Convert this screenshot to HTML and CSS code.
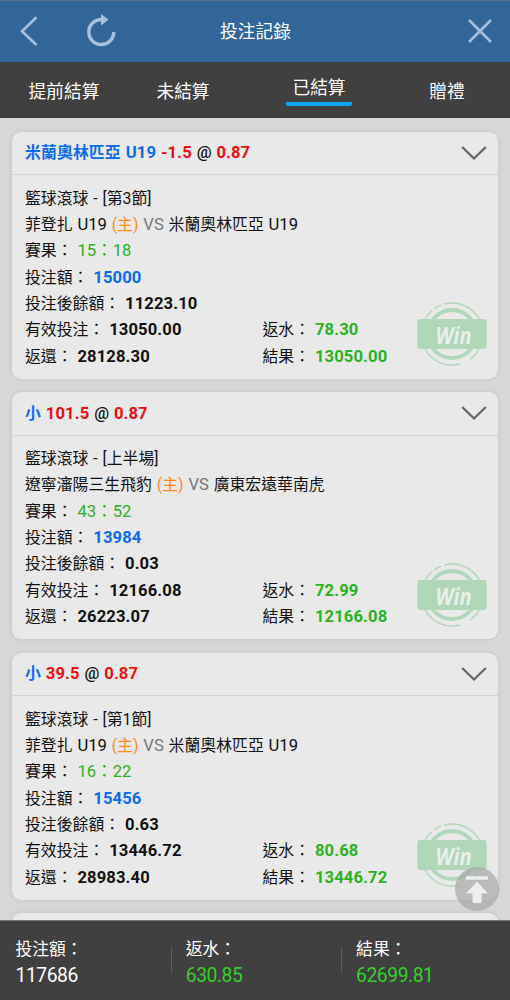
FILE: index.html
```html
<!DOCTYPE html>
<html lang="zh-Hant">

<head>
    <meta charset="UTF-8">
    <meta name="viewport" content="width=device-width, initial-scale=1.0">
    <title>投注記錄</title>
    <link rel="stylesheet" href="styles.css">
</head>

<body>
    <div class="app">
        <header class="header">
            <svg class="back" width="20" height="32" viewBox="0 0 20 32">
                <path d="M17.5 2.3 L3 16.2 L17.5 30" fill="none" stroke="#a6c1de" stroke-width="2.6" />
            </svg>
            <svg class="refresh" width="32" height="34" viewBox="0 0 32 34">
                <path d="M16 6.5 A12.5 12.5 0 1 0 27.8 19" fill="none" stroke="#a6c1de" stroke-width="3.4" />
                <path d="M15 1 L22.5 6.8 L15 12.5 Z" fill="#a6c1de" />
            </svg>
            <h1 class="title">投注記錄</h1>
            <svg class="close" width="26" height="26" viewBox="0 0 26 26">
                <path d="M2 2 L24 24 M24 2 L2 24" fill="none" stroke="#a6c1de" stroke-width="2.6" />
            </svg>
        </header>

        <nav class="tabs">
            <a class="tab">提前結算</a>
            <a class="tab">未結算</a>
            <a class="tab active"><span>已結算</span></a>
            <a class="tab">贈禮</a>
        </nav>

        <main class="list">
            <section class="card">
                <div class="card-head">
                    <p><b class="blue team">米蘭奧林匹亞 <span class="en">U19</span></b> <b class="red">-1.5</b> <span class="at">@</span> <b class="red">0.87</b></p>
                    <svg width="26" height="16"><use href="#arrow" /></svg>
                </div>
                <div class="card-body">
                    <p>籃球滾球 - [第3節]</p>
                    <p>菲登扎 <span class="en">U19</span> <span class="orange">(主)</span> <span class="gray en">VS</span> 米蘭奧林匹亞 <span class="en">U19</span></p>
                    <p>賽果： <span class="green en">15：18</span></p>
                    <p>投注額： <b class="blue">15000</b></p>
                    <p>投注後餘額： <b>11223.10</b></p>
                    <div class="row">
                        <p>有效投注： <b>13050.00</b></p>
                        <p>返水： <b class="green">78.30</b></p>
                    </div>
                    <div class="row">
                        <p>返還： <b>28128.30</b></p>
                        <p>結果： <b class="green">13050.00</b></p>
                    </div>
                </div>
                <svg class="stamp" width="70" height="64"><use href="#stamp" /></svg>
            </section>

            <section class="card">
                <div class="card-head">
                    <p><b class="blue team">小</b> <b class="red">101.5</b> <span class="at">@</span> <b class="red">0.87</b></p>
                    <svg width="26" height="16"><use href="#arrow" /></svg>
                </div>
                <div class="card-body">
                    <p>籃球滾球 - [上半場]</p>
                    <p>遼寧瀋陽三生飛豹 <span class="orange">(主)</span> <span class="gray en">VS</span> 廣東宏遠華南虎</p>
                    <p>賽果： <span class="green en">43：52</span></p>
                    <p>投注額： <b class="blue">13984</b></p>
                    <p>投注後餘額： <b>0.03</b></p>
                    <div class="row">
                        <p>有效投注： <b>12166.08</b></p>
                        <p>返水： <b class="green">72.99</b></p>
                    </div>
                    <div class="row">
                        <p>返還： <b>26223.07</b></p>
                        <p>結果： <b class="green">12166.08</b></p>
                    </div>
                </div>
                <svg class="stamp" width="70" height="64"><use href="#stamp" /></svg>
            </section>

            <section class="card">
                <div class="card-head">
                    <p><b class="blue team">小</b> <b class="red">39.5</b> <span class="at">@</span> <b class="red">0.87</b></p>
                    <svg width="26" height="16"><use href="#arrow" /></svg>
                </div>
                <div class="card-body">
                    <p>籃球滾球 - [第1節]</p>
                    <p>菲登扎 <span class="en">U19</span> <span class="orange">(主)</span> <span class="gray en">VS</span> 米蘭奧林匹亞 <span class="en">U19</span></p>
                    <p>賽果： <span class="green en">16：22</span></p>
                    <p>投注額： <b class="blue">15456</b></p>
                    <p>投注後餘額： <b>0.63</b></p>
                    <div class="row">
                        <p>有效投注： <b>13446.72</b></p>
                        <p>返水： <b class="green">80.68</b></p>
                    </div>
                    <div class="row">
                        <p>返還： <b>28983.40</b></p>
                        <p>結果： <b class="green">13446.72</b></p>
                    </div>
                </div>
                <svg class="stamp" width="70" height="64"><use href="#stamp" /></svg>
            </section>

            <section class="card"></section>
        </main>

        <svg class="to-top" width="44" height="44" viewBox="0 0 44 44">
            <circle cx="22" cy="22" r="22" fill="#a3a3a3" fill-opacity="0.65" />
            <rect x="11" y="9.3" width="22" height="3.4" rx="1" fill="#eee" />
            <path d="M22 14.5 L33 26.5 H26.5 V35 Q26.5 36 25.5 36 H18.5 Q17.5 36 17.5 35 V26.5 H11 Z" fill="#eee" />
        </svg>

        <footer class="total">
            <div class="total-item">
                <p>投注額：</p>
                <strong>117686</strong>
            </div>
            <div class="total-item">
                <p>返水：</p>
                <strong class="light">630.85</strong>
            </div>
            <div class="total-item">
                <p>結果：</p>
                <strong class="light">62699.81</strong>
            </div>
        </footer>
    </div>

    <svg class="defs" width="0" height="0">
        <symbol id="arrow" viewBox="0 0 26 16">
            <path d="M1.2 2 L13 13.5 L24.8 2" fill="none" stroke="#666" stroke-width="2.3" />
        </symbol>
        <symbol id="stamp" viewBox="0 0 70 64">
            <g fill="none" stroke="#afd7b8">
                <circle cx="35" cy="32" r="24" stroke-width="3.8" />
                <path d="M27 2.1 A31 31 0 0 1 65.5 26 M7.5 18 A31 31 0 0 1 15 8.5 M17 7 A31 31 0 0 1 24 3.2 M7.5 46 A31 31 0 0 0 43 62 M53 57.2 A31 31 0 0 0 63.5 44" stroke-width="1.4" />
            </g>
            <rect x="0.3" y="17" width="69.3" height="30" rx="3" fill="#afd7b8" />
            <text class="stamp-text" x="36.5" y="41.5" text-anchor="middle" textLength="36" lengthAdjust="spacingAndGlyphs">Win</text>
        </symbol>
    </svg>
</body>

</html>
```

FILE: styles.css
```css
* {
    margin: 0;
    padding: 0;
    box-sizing: border-box;
}

body {
    font-family: Roboto, "Noto Sans CJK TC", sans-serif;
    font-size: 15.87px;
    word-spacing: 0.9px;
    color: #111;
    background-color: #d7d7d7;
    overflow: hidden;
}

.defs {
    display: block;
}

.app {
    position: relative;
    width: 510px;
    height: 1000px;
    display: flex;
    flex-direction: column;
    overflow: hidden;
}

/* 頂部 */
.header {
    flex: none;
    height: 62px;
    padding: 0 17px 1px 19px;
    display: grid;
    grid-template-columns: 67px 32px 1fr 100px;
    align-items: center;
    background-color: #326698;
    border-top: 1px solid #56748d;
}

.refresh {
    margin-top: -3px;
}

.title {
    margin-top: -2px;
    font-size: 17.7px;
    font-weight: 400;
    text-align: center;
    color: #fff;
}

.close {
    justify-self: end;
}

/* 分頁 */
.tabs {
    flex: none;
    height: 56px;
    display: grid;
    grid-template-columns: 128px 110px 162px 94px;
    justify-items: center;
    background-color: #404040;
    color: #fff;
    font-size: 17.7px;
    line-height: 60px;
}

.active span {
    display: block;
    width: 66px;
    height: 44px;
    line-height: 52px;
    text-align: center;
    border-bottom: 4px solid #0ea5f2;
    border-radius: 2px;
}

/* 注單列表 */
.list {
    flex: 1;
    min-height: 0;
    padding: 13.7px 12px 0;
    overflow: hidden;
}

.card {
    position: relative;
    height: 247.3px;
    margin-bottom: 13.2px;
    background-color: #e9e9e9;
    border-radius: 9px;
    box-shadow: 0 0 4px rgba(0, 0, 0, 0.1);
}

.card-head {
    height: 43.5px;
    padding: 0 11.5px 2px 13px;
    display: flex;
    justify-content: space-between;
    align-items: center;
    border-bottom: 1px solid #d3d3d3;
}

.card-head svg {
    margin-top: 2px;
}

.card-body {
    padding: 10.4px 13px 0;
    line-height: 26.35px;
}

.card-body p {
    height: 26.35px;
    white-space: nowrap;
}

.row {
    display: grid;
    grid-template-columns: 237.5px 1fr;
}

b {
    font-size: 16.6px;
    font-weight: 700;
    letter-spacing: 0.12px;
}

/* 英數比中文略大 */
.en {
    font-size: 16.6px;
}

.team {
    font-size: 15.85px;
}

.at {
    font-size: 16.6px;
    font-weight: 500;
}

.blue {
    color: #0b6cf0;
}

.red {
    color: #e9100f;
}

.green {
    color: #29b321;
}

.orange {
    color: #fa8c16;
}

.gray {
    color: #777;
}

.stamp {
    position: absolute;
    right: 11.5px;
    bottom: 12.5px;
}

.stamp-text {
    font-family: "Open Sans", sans-serif;
    font-size: 23px;
    font-weight: 700;
    font-style: italic;
    fill: #e9efea;
}

.to-top {
    position: absolute;
    left: 455px;
    top: 867px;
}

/* 底部合計 */
.total {
    flex: none;
    height: 80px;
    padding: 1px 0 0 0.5px;
    display: grid;
    grid-template-columns: 170.3px 170.3px 1fr;
    align-items: center;
    background-color: #404040;
    border-top: 1px solid #777;
    color: #fff;
}

.total-item {
    padding-left: 15px;
    display: grid;
    grid-template-rows: 26px 26px;
    align-items: center;
    font-size: 16.8px;
    background: linear-gradient(#5c5c5c, #5c5c5c) no-repeat 0 12px / 1px 27px;
}

.total-item:first-child {
    background: none;
}

.total-item strong {
    padding-top: 2px;
    font-size: 19.3px;
    font-weight: 400;
    letter-spacing: -0.45px;
}

.total-item .light {
    color: #35cf2c;
}
```
